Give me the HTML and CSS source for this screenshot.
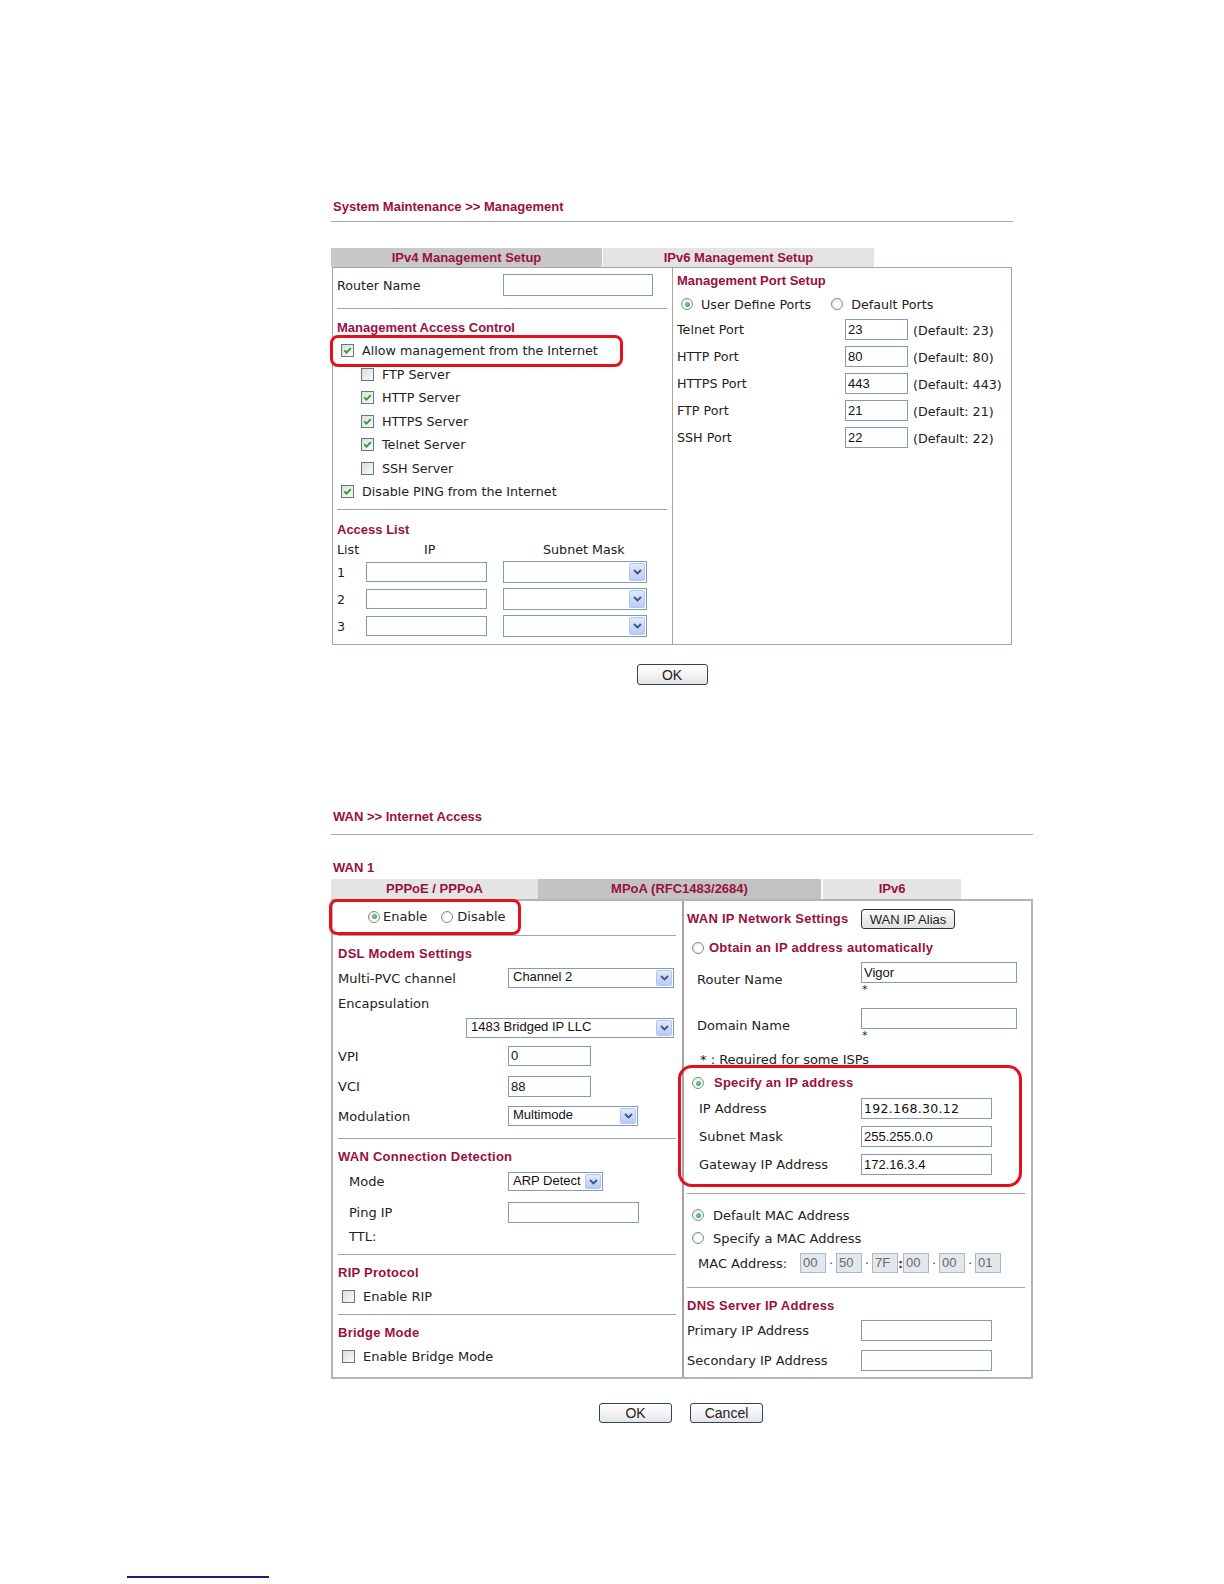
FILE: index.html
```html
<!DOCTYPE html>
<html>
<head>
<meta charset="utf-8">
<link rel="stylesheet" href="styles.css">
</head>
<body>
<div class="page">

<div class="sec sec1">
  <div class="title">System Maintenance &gt;&gt; Management</div>
  <div class="tabs tabs1"><div class="t1">IPv4 Management Setup</div><div class="t2">IPv6 Management Setup</div></div>
  <div class="box1">
    <div class="b1l">
      <div class="row r-rn"><span class="lbl w166">Router Name</span><span class="inp w150 h22"></span></div>
      <div class="hr m12"></div>
      <div class="h13 m11">Management Access Control</div>
      <div class="ckrow p4 firstck"><span class="cb on"><svg viewBox="0 0 11 11" width="11" height="11"><path d="M2.3 5.4l2.2 2.3L8.8 3.2" stroke="#2f9b2f" stroke-width="1.8" fill="none"/></svg></span>Allow management from the Internet</div>
      <div class="ckrow p24"><span class="cb"></span>FTP Server</div>
      <div class="ckrow p24"><span class="cb on"><svg viewBox="0 0 11 11" width="11" height="11"><path d="M2.3 5.4l2.2 2.3L8.8 3.2" stroke="#2f9b2f" stroke-width="1.8" fill="none"/></svg></span>HTTP Server</div>
      <div class="ckrow p24"><span class="cb on"><svg viewBox="0 0 11 11" width="11" height="11"><path d="M2.3 5.4l2.2 2.3L8.8 3.2" stroke="#2f9b2f" stroke-width="1.8" fill="none"/></svg></span>HTTPS Server</div>
      <div class="ckrow p24"><span class="cb on"><svg viewBox="0 0 11 11" width="11" height="11"><path d="M2.3 5.4l2.2 2.3L8.8 3.2" stroke="#2f9b2f" stroke-width="1.8" fill="none"/></svg></span>Telnet Server</div>
      <div class="ckrow p24"><span class="cb"></span>SSH Server</div>
      <div class="ckrow p4"><span class="cb on"><svg viewBox="0 0 11 11" width="11" height="11"><path d="M2.3 5.4l2.2 2.3L8.8 3.2" stroke="#2f9b2f" stroke-width="1.8" fill="none"/></svg></span>Disable PING from the Internet</div>
      <div class="hr m8"></div>
      <div class="h13 m12">Access List</div>
      <div class="row alhead"><span class="c-list">List</span><span class="c-ip">IP</span><span>Subnet Mask</span></div>
      <div class="row alrow first"><span class="c-no">1</span><span class="inp w121 h20"></span><span class="sel w144 h22"><span class="sv"></span><span class="arr"><svg viewBox="0 0 9 6" width="9" height="6"><path d="M1 1l3.5 3.5L8 1" stroke="#3b5488" stroke-width="1.8" fill="none"/></svg></span></span></div>
      <div class="row alrow"><span class="c-no">2</span><span class="inp w121 h20"></span><span class="sel w144 h22"><span class="sv"></span><span class="arr"><svg viewBox="0 0 9 6" width="9" height="6"><path d="M1 1l3.5 3.5L8 1" stroke="#3b5488" stroke-width="1.8" fill="none"/></svg></span></span></div>
      <div class="row alrow"><span class="c-no">3</span><span class="inp w121 h20"></span><span class="sel w144 h22"><span class="sv"></span><span class="arr"><svg viewBox="0 0 9 6" width="9" height="6"><path d="M1 1l3.5 3.5L8 1" stroke="#3b5488" stroke-width="1.8" fill="none"/></svg></span></span></div>
    </div>
    <div class="b1r">
      <div class="h13">Management Port Setup</div>
      <div class="row rdrow1"><span class="rd on"></span><span class="rdt">User Define Ports</span><span class="rd ml20"></span><span class="rdt">Default Ports</span></div>
      <div class="row prow first"><span class="lbl w168">Telnet Port</span><span class="inp w63 h21">23</span><span class="dflt">(Default: 23)</span></div>
      <div class="row prow"><span class="lbl w168">HTTP Port</span><span class="inp w63 h21">80</span><span class="dflt">(Default: 80)</span></div>
      <div class="row prow"><span class="lbl w168">HTTPS Port</span><span class="inp w63 h21">443</span><span class="dflt">(Default: 443)</span></div>
      <div class="row prow"><span class="lbl w168">FTP Port</span><span class="inp w63 h21">21</span><span class="dflt">(Default: 21)</span></div>
      <div class="row prow"><span class="lbl w168">SSH Port</span><span class="inp w63 h21">22</span><span class="dflt">(Default: 22)</span></div>
    </div>
    <div class="hl hl1"></div>
  </div>
  <div class="btnrow btnrow1"><span class="btn ok1">OK</span></div>
</div>

<div class="sec sec2">
  <div class="title">WAN &gt;&gt; Internet Access</div>
  <div class="h13 wan1">WAN 1</div>
  <div class="tabs tabs2"><div class="t1">PPPoE / PPPoA</div><div class="t2">MPoA (RFC1483/2684)</div><div class="t3">IPv6</div></div>
  <div class="box2">
    <div class="b2l">
      <div class="row enrow"><span class="rd on"></span><span class="ent">Enable</span><span class="rd ml14"></span><span class="dist">Disable</span></div>
      <div class="hr m7"></div>
      <div class="h13b m10">DSL Modem Settings</div>
      <div class="row r20 m6"><span class="lbl w170">Multi-PVC channel</span><span class="sel w166 h20"><span class="sv">Channel 2</span><span class="arr"><svg viewBox="0 0 9 6" width="9" height="6"><path d="M1 1l3.5 3.5L8 1" stroke="#3b5488" stroke-width="1.8" fill="none"/></svg></span></span></div>
      <div class="row r16 m7">Encapsulation</div>
      <div class="row r20 m7 pl128"><span class="sel w208 h20"><span class="sv">1483 Bridged IP LLC</span><span class="arr"><svg viewBox="0 0 9 6" width="9" height="6"><path d="M1 1l3.5 3.5L8 1" stroke="#3b5488" stroke-width="1.8" fill="none"/></svg></span></span></div>
      <div class="row r20 m8"><span class="lbl w170">VPI</span><span class="inp w83 h20">0</span></div>
      <div class="row r21 m10"><span class="lbl w170">VCI</span><span class="inp w83 h21">88</span></div>
      <div class="row r20 m9"><span class="lbl w170">Modulation</span><span class="sel w130 h20"><span class="sv">Multimode</span><span class="arr"><svg viewBox="0 0 9 6" width="9" height="6"><path d="M1 1l3.5 3.5L8 1" stroke="#3b5488" stroke-width="1.8" fill="none"/></svg></span></span></div>
      <div class="hr m12"></div>
      <div class="h13b m10">WAN Connection Detection</div>
      <div class="row r19 m7 pl11"><span class="lbl w159">Mode</span><span class="sel w95 h19"><span class="sv">ARP Detect</span><span class="arr"><svg viewBox="0 0 9 6" width="9" height="6"><path d="M1 1l3.5 3.5L8 1" stroke="#3b5488" stroke-width="1.8" fill="none"/></svg></span></span></div>
      <div class="row r21 m11 pl11"><span class="lbl w159">Ping IP</span><span class="inp w131 h21"></span></div>
      <div class="row r16 m5 pl11">TTL:</div>
      <div class="hr m10"></div>
      <div class="h13b m10">RIP Protocol</div>
      <div class="row r16 m7 pl4"><span class="cb"></span>Enable RIP</div>
      <div class="hr m10"></div>
      <div class="h13b m10">Bridge Mode</div>
      <div class="row r16 m7 pl4"><span class="cb"></span>Enable Bridge Mode</div>
    </div>
    <div class="b2r">
      <div class="row r20"><span class="h13b w174">WAN IP Network Settings</span><span class="btn alias">WAN IP Alias</span></div>
      <div class="row r16 m11"><span class="rd ml5"></span><span class="h13b ml5">Obtain an IP address automatically</span></div>
      <div class="row m6"><span class="lbl w174 pl10">Router Name</span><span class="col"><span class="inp w156 h21">Vigor</span><span class="star">*</span></span></div>
      <div class="row m12"><span class="lbl w174 pl10">Domain Name</span><span class="col"><span class="inp w156 h21"></span><span class="star">*</span></span></div>
      <div class="req">* : Required for some ISPs</div>
      <div class="row r16 m11"><span class="rd on ml5"></span><span class="h13b ml10">Specify an IP address</span></div>
      <div class="row r21 m7"><span class="lbl w174 pl12">IP Address</span><span class="inp w131 h21 ipv">192.168.30.12</span></div>
      <div class="row r21 m7"><span class="lbl w174 pl12">Subnet Mask</span><span class="inp w131 h21">255.255.0.0</span></div>
      <div class="row r21 m7"><span class="lbl w174 pl12">Gateway IP Address</span><span class="inp w131 h21">172.16.3.4</span></div>
      <div class="hr m18"></div>
      <div class="row r16 m13"><span class="rd on ml5"></span><span class="ml9">Default MAC Address</span></div>
      <div class="row r16 m7"><span class="rd ml5"></span><span class="ml9">Specify a MAC Address</span></div>
      <div class="row r20 m7"><span class="lbl w113 pl11">MAC Address:</span><span class="mb">00</span><span class="ms">·</span><span class="mb">50</span><span class="ms">·</span><span class="mb">7F</span><span class="ms colon">:</span><span class="mb">00</span><span class="ms">·</span><span class="mb">00</span><span class="ms">·</span><span class="mb">01</span></div>
      <div class="hr m14"></div>
      <div class="h13b m10">DNS Server IP Address</div>
      <div class="row r21 m6"><span class="lbl w174">Primary IP Address</span><span class="inp w131 h21"></span></div>
      <div class="row r21 m9"><span class="lbl w174">Secondary IP Address</span><span class="inp w131 h21"></span></div>
    </div>
    <div class="hl hl2"></div>
    <div class="hl hl3"></div>
  </div>
  <div class="btnrow btnrow2"><span class="btn b73">OK</span><span class="btn b73">Cancel</span></div>
</div>

<div class="foot"></div>
</div>
</body>
</html>
```

FILE: styles.css
```css
* { box-sizing: border-box; }
body { margin: 0; background: #fff; font-family: "DejaVu Sans", Verdana, sans-serif; color: #222; }
.page { width: 1224px; }
.sec { margin-left: 331px; position: relative; }
.sec1 { width: 682px; padding-top: 199px; font-size: 12.7px; }
.sec2 { width: 702px; margin-top: 124px; font-size: 13px; }

.title { font: bold 13px/16px "Liberation Sans", Arial, sans-serif; color: #99103f; padding: 0 0 6px 2px; border-bottom: 1px solid #a8a8a8; }
.sec2 .title { padding-bottom: 9px; }

.tabs { display: flex; font: bold 13px "Liberation Sans", Arial, sans-serif; color: #99103f; text-align: center; }
.tabs1 { margin-top: 26px; height: 19px; line-height: 19px; }
.tabs1 .t1 { width: 271px; background: #c8c8c8; }
.tabs1 .t2 { width: 271px; margin-left: 1px; background: #e3e3e3; }
.tabs2 { margin-top: 3px; height: 20px; line-height: 20px; }
.tabs2 .t1 { width: 207px; background: #e4e4e4; }
.tabs2 .t2 { width: 283px; background: #c3c3c3; }
.tabs2 .t3 { width: 138px; margin-left: 2px; background: #e4e4e4; }

.box1 { margin-left: 1px; width: 680px; height: 378px; border: 1px solid #aaa990; display: flex; position: relative; }
.b1l { width: 340px; border-right: 1px solid #aaa990; padding: 6px 5px 0 4px; }
.b1r { flex: 1; padding: 5px 0 0 4px; }

.box2 { width: 702px; height: 480px; border: 2px solid #b4b4b4; display: flex; position: relative; }
.b2l { width: 351px; border-right: 2px solid #a3a3a3; padding: 4px 6px 0 5px; }
.b2r { flex: 1; padding: 8px 6px 0 3px; }

.row { display: flex; align-items: center; }
.col { display: flex; flex-direction: column; }
.hr { border-top: 1px solid #a3a3a3; height: 0; }
.h13 { font: bold 13px/16px "Liberation Sans", Arial, sans-serif; color: #99103f; }
.h13b { font: bold 13px/16px "Liberation Sans", Arial, sans-serif; letter-spacing: 0.25px; color: #99103f; }
.wan1 { margin-top: 25px; padding-left: 2px; }

.m5 { margin-top: 5px; } .m6 { margin-top: 6px; } .m7 { margin-top: 7px; } .m8 { margin-top: 8px; }
.m9 { margin-top: 9px; } .m10 { margin-top: 10px; } .m11 { margin-top: 11px; } .m12 { margin-top: 12px; }
.m13 { margin-top: 13px; } .m14 { margin-top: 14px; } .m18 { margin-top: 18px; }
.hr.m8 { margin-top: 5.5px; }
.r16 { height: 16px; } .r19 { height: 19px; } .r20 { height: 20px; } .r21 { height: 21px; }
.pl4 { padding-left: 4px; } .pl10 { padding-left: 10px; } .pl11 { padding-left: 11px; } .pl12 { padding-left: 12px; } .pl128 { padding-left: 128px; }
.ml5 { margin-left: 5px; } .ml9 { margin-left: 9px; } .ml10 { margin-left: 10px; } .ml14 { margin-left: 14px; } .ml20 { margin-left: 20px; }

.lbl { display: inline-block; flex: none; }
.w113 { width: 113px; } .w159 { width: 159px; } .w166 { width: 166px; } .w168 { width: 168px; } .w170 { width: 170px; } .w174 { width: 174px; flex: none; }

.inp { display: inline-block; flex: none; border: 1px solid #7f9db9; background: #fff; font: 13px "Liberation Sans", Arial, sans-serif; color: #111; padding-left: 2px; line-height: 18px; }
.ipv { font-family: "DejaVu Sans", sans-serif; font-size: 12.5px; letter-spacing: 0.3px; }
.w63 { width: 63px; } .w83 { width: 83px; } .w121 { width: 121px; } .w131 { width: 131px; } .w144 { width: 144px; } .w150 { width: 150px; } .w156 { width: 156px; }
.w95 { width: 95px; } .w130 { width: 130px; } .w166.sel { width: 166px; } .w208 { width: 208px; }
.h19 { height: 19px; line-height: 17px; } .h20 { height: 20px; line-height: 18px; } .h21 { height: 21px; line-height: 19px; } .h22 { height: 22px; line-height: 20px; }

.sel { display: flex; flex: none; align-items: stretch; border: 1px solid #7f9db9; background: #fff; font: 13px "Liberation Sans", Arial, sans-serif; color: #111; }
.sv { flex: 1; padding-left: 4px; white-space: nowrap; overflow: hidden; }
.arr { width: 16px; margin: 1px; border: 1px solid #b5c6ee; border-radius: 2px; background: linear-gradient(#e0e9fd, #b9cbf5); display: flex; align-items: center; justify-content: center; }

.ckrow { display: flex; align-items: center; height: 23.5px; }
.ckrow.firstck { margin-top: 3px; }
.p4 { padding-left: 4px; } .p24 { padding-left: 24px; }
.cb { display: inline-flex; align-items: center; justify-content: center; width: 13px; height: 13px; border: 1px solid #5d7890; background: linear-gradient(135deg, #dcdcd6, #fbfbfa); margin-right: 8px; flex: none; }

.rd { display: inline-flex; align-items: center; justify-content: center; width: 12px; height: 12px; border-radius: 50%; border: 1px solid #7b8c9c; background: radial-gradient(circle at 60% 60%, #fff 30%, #dcdde0 100%); flex: none; }
.rd.on::after { content: ""; width: 5px; height: 5px; border-radius: 50%; background: radial-gradient(circle at 40% 40%, #7fd27f, #2a9a2a); }
.rdt { margin-left: 8px; }
.rdrow1 { height: 16px; margin-top: 7px; padding-left: 4px; }

.prow { height: 21px; margin-top: 6px; }
.prow.first { margin-top: 6.5px; }
.dflt { margin-left: 5px; padding-top: 2px; }
.prow .lbl { padding-top: 1px; }

.alhead { height: 16px; margin-top: 3px; }
.c-list { width: 87px; }
.c-ip { width: 119px; }
.alrow { height: 22px; margin-top: 5px; }
.alrow.first { margin-top: 4px; }
.c-no { width: 29px; }
.alrow .inp { margin-right: 16px; }
.r-rn { height: 22px; }

.enrow { height: 23px; padding-left: 30px; }
.ent { margin-left: 3px; }
.dist { margin-left: 4px; }

.star { font-size: 11px; line-height: 13px; padding-left: 1px; }
.req { margin-top: 10px; height: 12px; overflow: hidden; line-height: 16px; padding-left: 13px; }

.mb { display: inline-block; width: 26px; height: 20px; border: 1px solid #a8b8c8; background: #e4e8ec; font: 13px/18px "Liberation Sans", Arial, sans-serif; color: #6a6a6a; padding-left: 2px; flex: none; }
.ms { width: 10px; text-align: center; color: #555; flex: none; }
.ms.colon { width: 5px; color: #99103f; font-weight: bold; }

.btn { display: inline-flex; align-items: center; justify-content: center; border: 1px solid #2b4566; border-radius: 3px; background: linear-gradient(#ffffff, #f1f1f1 60%, #e3e3e3); font: 14px "Liberation Sans", Arial, sans-serif; color: #222; }
.btnrow { display: flex; justify-content: center; }
.btnrow1 { margin-top: 19px; }
.ok1 { width: 71px; height: 21px; }
.btnrow2 { margin-top: 24px; gap: 18px; padding-right: 2px; }
.b73 { width: 73px; height: 20px; }
.alias { width: 94px; height: 20px; font-size: 13px; border-color: #333; background: linear-gradient(#fafafa, #e0e0e0); }

.hl { position: absolute; border: 3px solid #e3101e; }
.hl1 { left: -3px; top: 67px; width: 293px; height: 32px; border-radius: 8px; }
.hl2 { left: -4px; top: -2px; width: 192px; height: 36px; border-radius: 8px; }
.hl3 { left: 345px; top: 164px; width: 344px; height: 122px; border-radius: 14px; }

.foot { margin-left: 127px; width: 142px; margin-top: 153px; border-top: 2px solid #1b1b86; }
```
